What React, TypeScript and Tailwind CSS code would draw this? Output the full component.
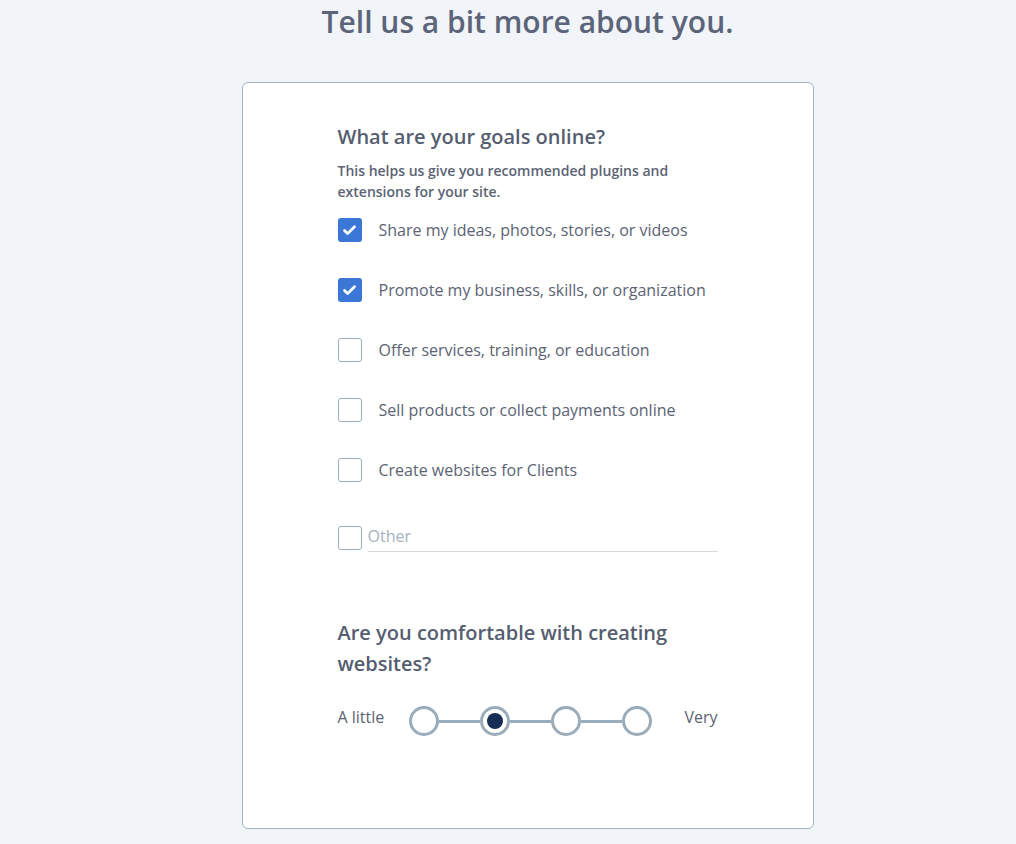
import { Check } from "lucide-react"

const GOALS = [
  { label: "Share my ideas, photos, stories, or videos", checked: true },
  { label: "Promote my business, skills, or organization", checked: true },
  { label: "Offer services, training, or education", checked: false },
  { label: "Sell products or collect payments online", checked: false },
  { label: "Create websites for Clients", checked: false },
]

function Box({ checked }: { checked: boolean }) {
  if (checked) {
    return (
      <span className="flex h-6 w-6 flex-shrink-0 items-center justify-center rounded-[3px] bg-[#3a77d6]">
        <Check size={15} strokeWidth={4.5} className="text-white" />
      </span>
    )
  }
  return <span className="block h-6 w-6 flex-shrink-0 rounded-[3px] border-[1.5px] border-[#9aabb9] bg-white" />
}

export default function App() {
  return (
    <div className="min-h-[844px] bg-[#f1f4f9] pt-[2px] pl-[39px] font-['Open_Sans',sans-serif]">
      <h1 className="text-center text-[30px] font-semibold leading-[40px] text-[#5b6478]">
        Tell us a bit more about you.
      </h1>

      <div className="mx-auto mt-[40px] w-[572px] rounded-[6px] border border-[#a3b3c4] bg-white pt-[39px] pb-[91px] pl-[95px] pr-[95px]">
        <div className="w-[380px]">
          <h2 className="text-[20px] font-semibold leading-[30px] text-[#555d70]">What are your goals online?</h2>
          <p className="mt-[8px] text-[14px] font-semibold leading-[21px] text-[#5b6374]">
            This helps us give you recommended plugins and extensions for your site.
          </p>

          <div className="mt-[16px] flex flex-col gap-[36px]">
            {GOALS.map((g, i) => (
              <label key={i} className="flex h-6 items-center gap-[17px]">
                <Box checked={g.checked} />
                <span className="text-[16px] leading-6 text-[#5b6374]">{g.label}</span>
              </label>
            ))}
          </div>

          <div className="mt-[42px] flex items-end gap-[6px]">
            <span className="mb-[2px]">
              <Box checked={false} />
            </span>
            <div className="flex-1 border-b border-[#d6d9de] pb-[3px] text-[16px] leading-[24px] text-[#a5b1bf]">Other</div>
          </div>

          <h2 className="mt-[65px] text-[20px] font-semibold leading-[31px] text-[#555d70]">
            Are you comfortable with creating websites?
          </h2>

          <div className="mt-[26px] flex items-center">
            <span className="pb-[8px] text-[16px] text-[#5b6374]">A little</span>
            <div className="ml-[25px] flex items-center">
              {[0, 1, 2, 3].map((n) => (
                <div key={n} className="flex items-center">
                  {n > 0 && <span className="block h-[3px] w-[41px] bg-[#9aabb9]" />}
                  <span className="flex h-[30px] w-[30px] items-center justify-center rounded-full border-[3px] border-[#9aabb9] bg-white">
                    {n === 1 && <span className="block h-[16px] w-[16px] rounded-full bg-[#162d55]" />}
                  </span>
                </div>
              ))}
            </div>
            <span className="ml-auto pb-[8px] text-[16px] text-[#5b6374]">Very</span>
          </div>
        </div>
      </div>
    </div>
  )
}
